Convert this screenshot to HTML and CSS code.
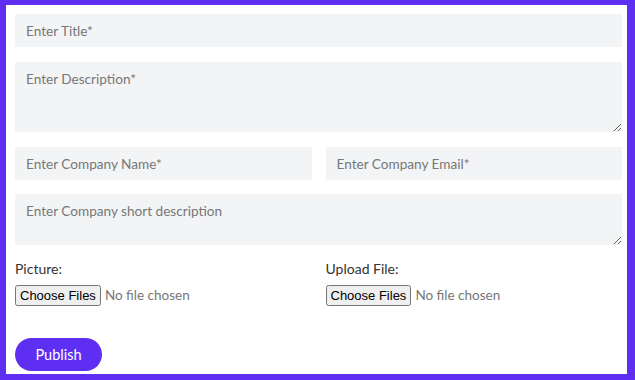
FILE: index.html
```html
<!DOCTYPE html>
<html lang="en">
<head>
    <meta charset="UTF-8">
    <meta name="viewport" content="width=device-width, initial-scale=1.0">
    <title>Post a Job</title>
    <link rel="stylesheet" href="styles.css">
</head>
<body>

    <!-- Job form card -->
    <div class="card">
        <form class="job-form">
            <input type="text" class="field" placeholder="Enter Title*">
            <textarea class="field area-lg" placeholder="Enter Description*"></textarea>

            <div class="row">
                <input type="text" class="field" placeholder="Enter Company Name*">
                <input type="email" class="field" placeholder="Enter Company Email*">
            </div>

            <textarea class="field area-sm" placeholder="Enter Company short description"></textarea>

            <div class="row uploads">
                <div class="upload">
                    <label for="picture">Picture:</label>
                    <input type="file" id="picture" multiple>
                </div>
                <div class="upload">
                    <label for="attachment">Upload File:</label>
                    <input type="file" id="attachment" multiple>
                </div>
            </div>

            <button type="submit" class="publish">Publish</button>
        </form>
    </div>

</body>
</html>
```

FILE: styles.css
```css
/* General Styles */
body {
    margin: 0;
    padding: 5px 8px 6px 6px;
    background: #5f2ef3;
    font-family: 'Lato', sans-serif;
    color: #333;
    height: 380px;
    box-sizing: border-box;
}

.card {
    background: #fff;
    height: 100%;
    box-sizing: border-box;
    padding: 9px 5px 0 9px;
}

.job-form {
    display: flex;
    flex-direction: column;
    gap: 15px;
}

.field {
    display: block;
    width: 100%;
    box-sizing: border-box;
    border: none;
    background: #f3f4f6;
    font-family: 'Lato', sans-serif;
    font-size: 13.6px;
    color: #333;
    padding: 0 11px;
    height: 33px;
    margin: 0;
}

.field::placeholder {
    color: #777;
}

textarea.field {
    padding-top: 9px;
    resize: vertical;
}

.area-lg {
    height: 70px;
}

.area-sm {
    height: 51px;
    margin-top: -1px;
}

.row {
    display: grid;
    grid-template-columns: 1fr 1fr;
    gap: 14px;
}

.upload label {
    display: block;
    font-size: 14px;
    color: #333;
    margin-bottom: 7px;
}

.upload input[type="file"] {
    font-family: 'Lato', sans-serif;
    font-size: 13.5px;
    color: #777;
}

.upload input[type="file"]::file-selector-button {
    font-family: 'Liberation Sans', Arial, sans-serif;
    font-size: 13px;
    color: #000;
    padding: 1px 3px;
    margin-right: 4px;
}

.publish {
    align-self: flex-start;
    margin-top: 17px;
    width: 87px;
    height: 33px;
    border: none;
    border-radius: 17px;
    background: #5f2ef3;
    color: #fff;
    font-family: 'Lato', sans-serif;
    font-size: 14.5px;
    font-weight: normal;
    cursor: pointer;
}
```
